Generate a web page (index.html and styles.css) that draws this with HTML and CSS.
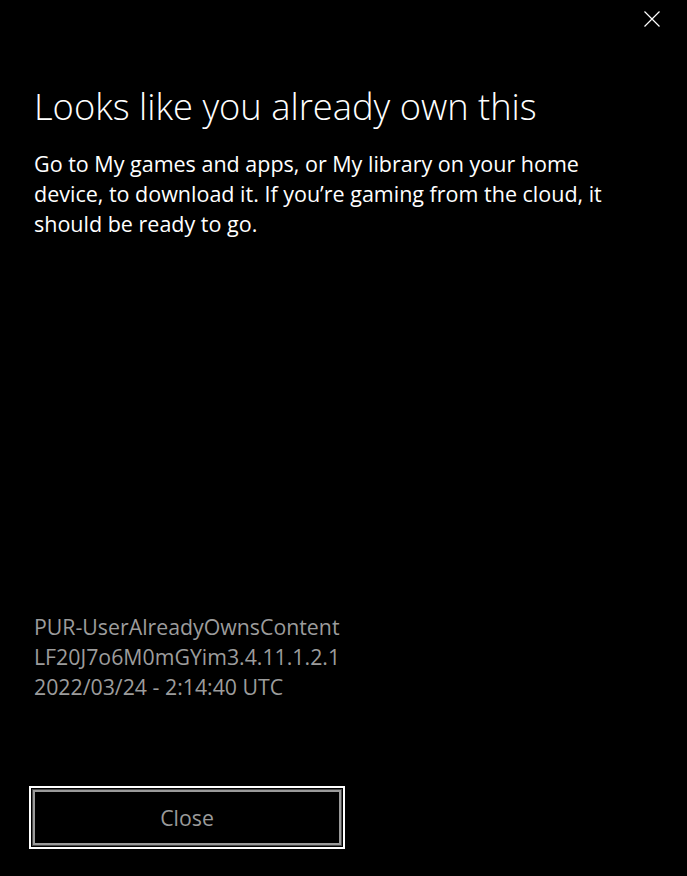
FILE: index.html
```html
<!DOCTYPE html>
<html>
<head>
<meta charset="utf-8">
<link rel="stylesheet" href="styles.css">
</head>
<body>
<div class="dialog">
  <div class="topbar">
    <button class="x-btn" aria-label="Close">
      <svg width="16" height="16" viewBox="0 0 16 16"><path d="M0.5 0.5 L15.5 15.5 M15.5 0.5 L0.5 15.5" stroke="#fff" stroke-width="1.2" fill="none"/></svg>
    </button>
  </div>
  <h1 class="title">Looks like you already own this</h1>
  <p class="message">Go to My games and apps, or My library on your home device, to download it. If you’re gaming from the cloud, it should be ready to go.</p>
  <div class="spacer"></div>
  <div class="codes">
    <div>PUR-UserAlreadyOwnsContent</div>
    <div>LF20J7o6M0mGYim3.4.11.1.2.1</div>
    <div>2022/03/24 - 2:14:40 UTC</div>
  </div>
  <div class="actions">
    <button class="close-btn">Close</button>
  </div>
</div>
</body>
</html>
```
FILE: styles.css
```css
html, body {
  margin: 0;
  padding: 0;
  background: #000;
  height: 100%;
}
.dialog {
  height: 876px;
  box-sizing: border-box;
  display: flex;
  flex-direction: column;
  padding: 0 0 0 34px;
  font-family: "Open Sans", "Noto Sans", sans-serif;
  color: #fff;
}
.topbar {
  display: flex;
  justify-content: flex-end;
  height: 80px;
}
.x-btn {
  background: none;
  border: none;
  padding: 0;
  margin: 11px 27px 0 0;
  width: 16px;
  height: 16px;
  display: block;
}
.x-btn svg { display: block; }
.title {
  margin: 0;
  font-weight: 300;
  font-size: 36.3px;
  line-height: 52px;
}
.message {
  margin: 17px 0 0 0;
  font-size: 21.5px;
  line-height: 30px;
  width: 595px;
}
.spacer { flex: 1; }
.codes {
  color: #9c9c9c;
  font-size: 21.3px;
  line-height: 30px;
}
.actions {
  margin: 88px 0 31px -1px;
}
.close-btn {
  display: block;
  width: 308px;
  height: 55px;
  margin-left: 0;
  background: #000;
  border: 2px solid #9a9a9a;
  box-shadow: 0 0 0 1px #4a4a4a, 0 0 0 2px #000, 0 0 0 4px #fff;
  color: #9a9a9a;
  font-family: "Open Sans", "Noto Sans", sans-serif;
  font-size: 21.3px;
  padding: 0;
  box-sizing: border-box;
}
```
